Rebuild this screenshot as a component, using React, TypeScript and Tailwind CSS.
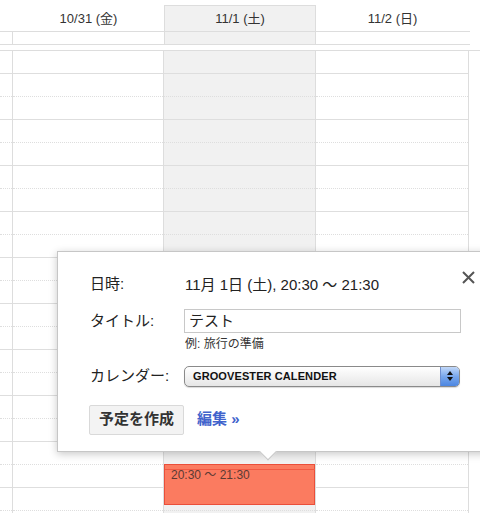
import React from "react";

const FONT = "font-['Liberation_Sans','Noto_Sans_CJK_JP',sans-serif]";

// column widths of the week grid (gutter, fri, sat/today, sun)
const columns = [
    { key: "gutter", width: "w-[13px]", today: false },
    { key: "fri", width: "w-[151px]", today: false },
    { key: "sat", width: "w-[152px]", today: true },
    { key: "sun", width: "w-[153px]", today: false },
];

const headers = [
    { label: "", width: "w-[13px]", today: false },
    { label: "10/31 (金)", width: "w-[151px]", today: false },
    { label: "11/1 (土)", width: "w-[152px]", today: true },
    { label: "11/2 (日)", width: "w-[153px]", today: false },
];

const ROWS = 21;

function GridColumn({ width, today }: { width: string; today: boolean }) {
    return (
        <div className={`${width} shrink-0 border-r border-[#dddddd] ${today ? "bg-[#f1f1f1]" : "bg-white"}`}>
            {Array.from({ length: ROWS }).map((_, i) => (
                <div
                    key={i}
                    className={`h-[23px] border-b border-[#dedede] ${i % 2 === 0 ? "border-solid" : "border-dotted"}`}
                />
            ))}
        </div>
    );
}

function CloseIcon() {
    return (
        <svg width="13" height="13" viewBox="0 0 13 13" fill="none">
            <path d="M1 1L12 12M12 1L1 12" stroke="#555" strokeWidth="2" />
        </svg>
    );
}

export default function App() {
    return (
        <div className={`relative w-[480px] h-[513px] overflow-hidden bg-white text-[#222] ${FONT}`}>
            {/* Day headers */}
            <div className="flex h-[31px]">
                {headers.map((h) => (
                    <div key={h.width + h.label} className={`${h.width} shrink-0 flex flex-col`}>
                        {h.today ? (
                            <div className="mt-[5px] flex-1 bg-[#f1f1f1] border-x border-t border-[#dddddd] flex items-center justify-center pt-[1px] text-[13px] text-[#333]">
                                {h.label}
                            </div>
                        ) : (
                            <div className="flex-1 flex items-center justify-center pt-[6px] text-[13px] text-[#333]">
                                {h.label}
                            </div>
                        )}
                    </div>
                ))}
            </div>

            {/* All-day row */}
            <div className="flex h-[14px] w-[470px] border-y border-[#dddddd]">
                {columns.map((c) => (
                    <div
                        key={c.key}
                        className={`${c.width} shrink-0 ${c.key === "gutter" ? "border-r border-[#dddddd]" : ""} ${c.today ? "bg-[#f1f1f1] border-x border-[#dddddd]" : ""}`}
                    />
                ))}
            </div>
            <div className="h-[5px]" />

            {/* Time grid */}
            <div className="flex border-t border-[#dddddd]">
                {columns.map((c) => (
                    <GridColumn key={c.key} width={c.width} today={c.today} />
                ))}
            </div>

            {/* Event block */}
            <div className="absolute left-[164px] top-[464px] w-[151px] h-[41px] bg-[#fb7b60] border border-[#ea4f3a]">
                <div className="absolute left-0 right-[-1px] top-[4px] h-px bg-[#f25a44]" />
                <div className="pl-[6px] pt-[1px] text-[12px] text-[#5b3a33]">20:30 ～ 21:30</div>
            </div>

            {/* Quick add popup */}
            <div className="absolute left-[57px] top-[251px] w-[440px] h-[201px] bg-white border border-[#c6c6c6] shadow-[0_2px_8px_rgba(0,0,0,0.22)]">
                <div className="absolute left-[404px] top-[19px]">
                    <CloseIcon />
                </div>

                <div className="pl-[32px] pt-[20px]">
                    <div className="flex items-center h-[24px]">
                        <div className="w-[95px] text-[15px]">日時:</div>
                        <div className="text-[15px] pt-[3px]">11月 1日 (土), 20:30 ～ 21:30</div>
                    </div>

                    <div className="flex items-center mt-[13px]">
                        <div className="w-[94px] text-[15px]">タイトル:</div>
                        <div className="w-[277px] h-[24px] border border-[#c8c8c8] flex items-center pl-[4px] text-[15px]">
                            テスト
                        </div>
                    </div>
                    <div className="ml-[95px] mt-[5px] text-[12px] leading-[13px] text-[#333]">例: 旅行の準備</div>

                    <div className="flex items-center mt-[14px]">
                        <div className="w-[94px] text-[15px]">カレンダー:</div>
                        <div className="w-[276px] h-[21px] flex rounded-[5px] border border-[#8a8a8a] bg-gradient-to-b from-white to-[#e6e6e6] shadow-[0_1px_1px_rgba(0,0,0,0.15)]">
                            <div className="flex-1 flex items-center pl-[8px] text-[11px] font-bold text-[#111] tracking-[0.1px]">
                                GROOVESTER CALENDER
                            </div>
                            <div className="w-[19px] rounded-r-[4px] border-l border-[#6e8fcf] bg-gradient-to-b from-[#c2d8f8] via-[#78a7ec] to-[#4d86e1] flex flex-col items-center justify-center gap-[2px]">
                                <svg width="6" height="4" viewBox="0 0 6 4">
                                    <path d="M3 0L6 4H0Z" fill="#111" />
                                </svg>
                                <svg width="6" height="4" viewBox="0 0 6 4">
                                    <path d="M0 0H6L3 4Z" fill="#111" />
                                </svg>
                            </div>
                        </div>
                    </div>

                    <div className="flex items-center mt-[17px]">
                        <div className="w-[95px] h-[30px] -ml-[1px] rounded-[2px] border border-[#d9d9d9] bg-[#f3f3f3] flex items-center justify-center text-[15px] font-bold text-[#333]">
                            予定を作成
                        </div>
                        <div className="ml-[13px] text-[15px] font-bold text-[#4163cc]">編集 »</div>
                    </div>
                </div>

                {/* pointer */}
                <div className="absolute left-[204px] bottom-[-7px] w-[12px] h-[12px] rotate-45 bg-white border-r border-b border-[#c6c6c6]" />
            </div>
        </div>
    );
}
